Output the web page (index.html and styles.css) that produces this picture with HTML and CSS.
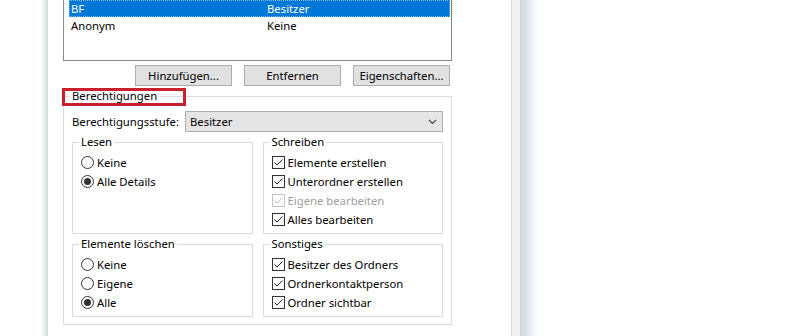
FILE: index.html
```html
<!DOCTYPE html>
<html lang="de">
<head>
    <meta charset="UTF-8">
    <meta name="viewport" content="width=device-width, initial-scale=1.0">
    <title>Berechtigungen</title>
    <link rel="stylesheet" href="styles.css">
</head>
<body>
    <div class="screen">
        <div class="desk"></div>
        <div class="frame-left"></div>

        <div class="dialog">
            <!-- Benutzerliste -->
            <div class="user-list">
                <div class="user-row selected">
                    <span class="user-name">BF</span>
                    <span>Besitzer</span>
                </div>
                <div class="user-row">
                    <span class="user-name">Anonym</span>
                    <span>Keine</span>
                </div>
            </div>

            <div class="buttons">
                <button class="btn">Hinzufügen...</button>
                <button class="btn">Entfernen</button>
                <button class="btn">Eigenschaften...</button>
            </div>

            <fieldset class="group main-group">
                <legend class="marked">Berechtigungen</legend>

                <div class="level-row">
                    <span>Berechtigungsstufe:</span>
                    <div class="combo">
                        <span>Besitzer</span>
                        <svg width="9" height="6" viewBox="0 0 9 6"><polyline points="1,1 4.5,4.5 8,1" fill="none" stroke="#444" stroke-width="1.1"/></svg>
                    </div>
                </div>

                <div class="sections">
                    <fieldset class="group">
                        <legend>Lesen</legend>
                        <div class="option"><span class="radio"></span>Keine</div>
                        <div class="option"><span class="radio on"></span>Alle Details</div>
                    </fieldset>

                    <fieldset class="group">
                        <legend>Schreiben</legend>
                        <div class="option"><span class="check"><svg width="11" height="11" viewBox="0 0 11 11"><polyline points="1.5,5.5 4,8 9.5,2.5" fill="none" stroke="#222" stroke-width="1"/></svg></span>Elemente erstellen</div>
                        <div class="option"><span class="check"><svg width="11" height="11" viewBox="0 0 11 11"><polyline points="1.5,5.5 4,8 9.5,2.5" fill="none" stroke="#222" stroke-width="1"/></svg></span>Unterordner erstellen</div>
                        <div class="option disabled"><span class="check"><svg width="11" height="11" viewBox="0 0 11 11"><polyline points="1.5,5.5 4,8 9.5,2.5" fill="none" stroke="#c2c2c2" stroke-width="1"/></svg></span>Eigene bearbeiten</div>
                        <div class="option"><span class="check"><svg width="11" height="11" viewBox="0 0 11 11"><polyline points="1.5,5.5 4,8 9.5,2.5" fill="none" stroke="#222" stroke-width="1"/></svg></span>Alles bearbeiten</div>
                    </fieldset>

                    <fieldset class="group">
                        <legend>Elemente löschen</legend>
                        <div class="option"><span class="radio"></span>Keine</div>
                        <div class="option"><span class="radio"></span>Eigene</div>
                        <div class="option"><span class="radio on"></span>Alle</div>
                    </fieldset>

                    <fieldset class="group">
                        <legend>Sonstiges</legend>
                        <div class="option"><span class="check"><svg width="11" height="11" viewBox="0 0 11 11"><polyline points="1.5,5.5 4,8 9.5,2.5" fill="none" stroke="#222" stroke-width="1"/></svg></span>Besitzer des Ordners</div>
                        <div class="option"><span class="check"><svg width="11" height="11" viewBox="0 0 11 11"><polyline points="1.5,5.5 4,8 9.5,2.5" fill="none" stroke="#222" stroke-width="1"/></svg></span>Ordnerkontaktperson</div>
                        <div class="option"><span class="check"><svg width="11" height="11" viewBox="0 0 11 11"><polyline points="1.5,5.5 4,8 9.5,2.5" fill="none" stroke="#222" stroke-width="1"/></svg></span>Ordner sichtbar</div>
                    </fieldset>
                </div>
            </fieldset>
        </div>

        <div class="frame-right"></div>
        <div class="shadow"></div>
    </div>
</body>
</html>
```

FILE: styles.css
```css
body {
    margin: 0;
    height: 336px;
    overflow: hidden;
    background-color: #fff;
    font-family: "Noto Sans", "Open Sans", sans-serif;
    font-size: 11.3px;
    color: #000;
}

.screen {
    display: flex;
    height: 336px;
}

.desk {
    width: 42px;
}

.frame-left {
    width: 5px;
    background: linear-gradient(to right, #f3f5f7, #dde3e9);
    border-right: 1px solid #d3d9df;
}

.dialog {
    width: 463px;
    padding-left: 15px;
    box-sizing: border-box;
    background-color: #fff;
}

.frame-right {
    width: 8px;
    background-color: #eef0f2;
    border-left: 1px solid #d9dcdf;
}

.shadow {
    width: 18px;
    background: linear-gradient(to right, #cad3db, #fff);
}

/* Benutzerliste */
.user-list {
    width: 389px;
    height: 62px;
    margin-top: -1px;
    padding: 0 1px 0 5px;
    box-sizing: border-box;
    border: 1px solid #828790;
}

.user-row {
    display: flex;
    align-items: center;
    height: 17px;
}

.user-row.selected {
    background-color: #0078d7;
    color: #fff;
    outline: 1px dotted #7fbdf2;
    outline-offset: -1px;
}

.user-name {
    width: 196px;
    padding-left: 2px;
}

.buttons {
    display: flex;
    justify-content: flex-end;
    gap: 12px;
    width: 389px;
    padding-right: 2px;
    box-sizing: border-box;
    margin-top: 4px;
}

.btn {
    width: 97px;
    height: 21px;
    padding: 0;
    background-color: #e1e1e1;
    border: 1px solid #adadad;
    font-family: inherit;
    font-size: inherit;
    color: #000;
}

/* Gruppen */
.group {
    margin: 0;
    min-width: 0;
    border: 1px solid #dcdcdc;
    padding: 3px 8px 4px;
}

.group legend {
    padding: 0 2px;
    margin-left: -2px;
    line-height: 16px;
}

.main-group {
    width: 389px;
    box-sizing: border-box;
    margin-top: 2px;
    padding: 0 8px 7px;
}

.marked {
    position: relative;
}

.marked::after {
    content: "";
    position: absolute;
    left: -8px;
    top: 0;
    width: 124px;
    height: 18px;
    border: 3px solid #c8202e;
    box-sizing: border-box;
}

.level-row {
    display: flex;
    align-items: center;
    margin-top: 7px;
}

.combo {
    display: flex;
    align-items: center;
    justify-content: space-between;
    width: 258px;
    height: 21px;
    margin-left: auto;
    padding: 0 5px 0 4px;
    box-sizing: border-box;
    background-color: #e5e5e5;
    border: 1px solid #adadad;
}

.sections {
    display: grid;
    grid-template-columns: 1fr 1fr;
    gap: 2px 10px;
    margin-top: 2px;
}

.option {
    display: flex;
    align-items: center;
    gap: 3px;
    height: 19px;
}

.option.disabled {
    color: #a0a0a0;
}

.radio {
    width: 13px;
    height: 13px;
    box-sizing: border-box;
    border: 1px solid #333;
    border-radius: 50%;
    display: flex;
    align-items: center;
    justify-content: center;
    background-color: #fff;
}

.radio.on::after {
    content: "";
    width: 7px;
    height: 7px;
    border-radius: 50%;
    background-color: #333;
}

.check {
    width: 13px;
    height: 13px;
    box-sizing: border-box;
    border: 1px solid #333;
    background-color: #fff;
    display: flex;
}

.disabled .check {
    border-color: #c2c2c2;
}
```
